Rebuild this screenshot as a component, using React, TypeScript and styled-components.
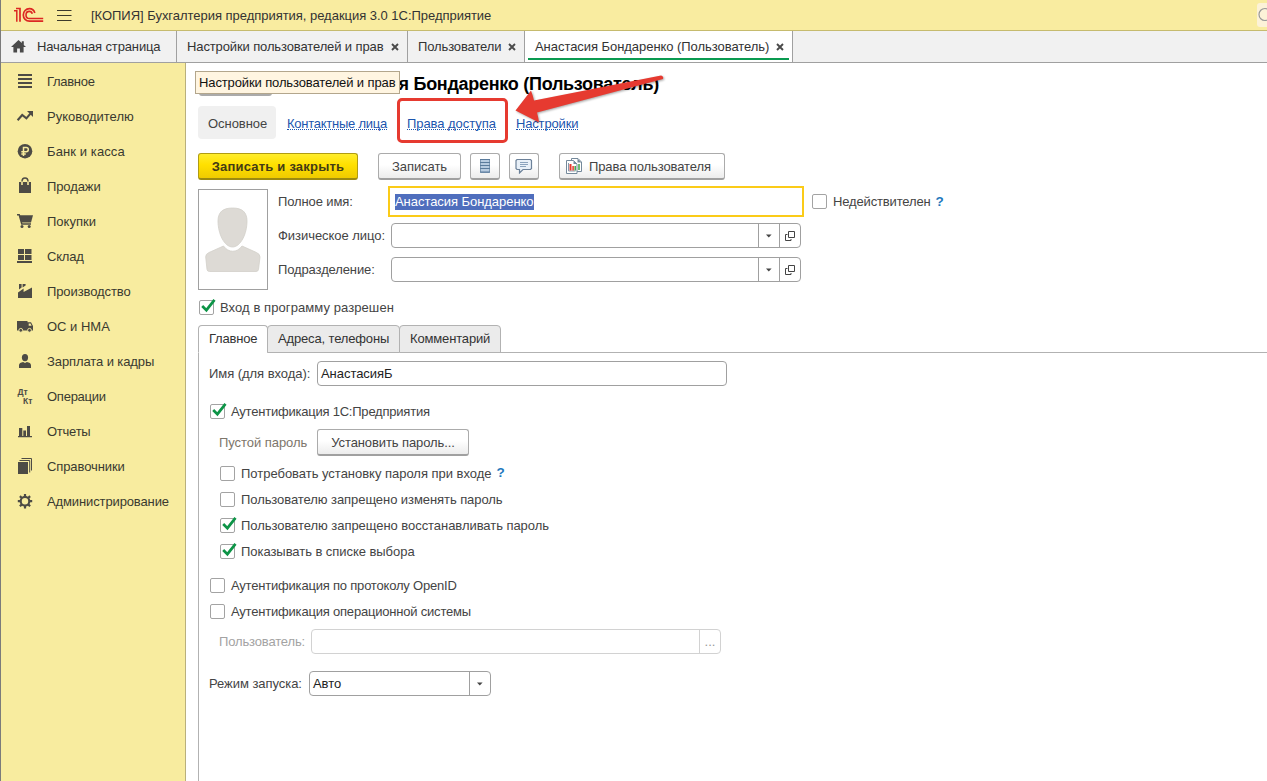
import React from "react";
import styled, { createGlobalStyle, css } from "styled-components";

const Global = createGlobalStyle`
  * { box-sizing: border-box; }
  html, body, #root { margin: 0; height: 100%; }
  body {
    overflow: hidden;
    background: #fff;
    color: #444;
    font-family: "Liberation Sans", Arial, sans-serif;
    font-size: 13px;
    line-height: 16px;
  }
`;

const Text = styled.span<{ $ls?: number }>`
  white-space: nowrap;
  letter-spacing: ${(p) => p.$ls ?? -0.05}px;
`;

const Window = styled.div`
  position: relative;
  display: flex;
  flex-direction: column;
  width: 1267px;
  height: 781px;
  border-left: 1px solid #7b7b7b;
  overflow: hidden;
`;

const TitleBar = styled.header`
  display: flex;
  align-items: center;
  height: 31px;
  flex: none;
  padding-left: 13px;
  background: #f9eca0;
  border-bottom: 1px solid #c6bb6e;
  color: #333;
`;
const TitleText = styled(Text)`
  margin-left: 19px;
  padding-top: 2px;
`;
const SearchStub = styled.div`
  width: 10px;
  height: 24px;
  margin-left: auto;
  border-radius: 3px 0 0 3px;
  background: #fcf2d8;
  overflow: hidden;
`;
const LogoSvg = styled.svg`
  display: block;
  flex: none;
`;
const MenuSvg = styled.svg`
  margin: 0 0 1px 13px;
  flex: none;
`;

const TabBar = styled.nav`
  display: flex;
  height: 32px;
  flex: none;
  background: #f1f1f1;
  border-bottom: 1px solid #a0a0a0;
  color: #333;
`;
const WindowTab = styled.div<{ $width: number; $active?: boolean }>`
  position: relative;
  display: flex;
  align-items: center;
  justify-content: space-between;
  width: ${(p) => p.$width}px;
  padding: 0 8px 0 10px;
  border-right: 1px solid #a0a0a0;
  background: ${(p) => (p.$active ? "#fff" : "transparent")};
  ${(p) =>
    p.$active &&
    css`
      &::after {
        content: "";
        position: absolute;
        left: 3px;
        right: 3px;
        bottom: 2px;
        height: 2px;
        background: #0a9a50;
      }
    `}
`;
const HomeTab = styled(WindowTab)`
  justify-content: flex-start;
  gap: 11px;
`;

const Body = styled.div`
  display: flex;
  flex: 1;
  min-height: 0;
`;
const Sidebar = styled.aside`
  width: 185px;
  flex: none;
  padding-top: 1px;
  background: #f8ec9f;
  border-right: 1px solid #b9b07c;
  color: #3a3a30;
`;
const SideItem = styled.div`
  display: flex;
  align-items: center;
  height: 35px;
  padding-left: 15px;
  gap: 13px;
  svg { flex: none; }
`;

const Form = styled.main`
  flex: 1;
  min-width: 0;
  display: flex;
  flex-direction: column;
  padding-left: 12px;
`;
const Heading = styled.h1`
  flex: none;
  width: 461px;
  height: 43px;
  margin: 0;
  line-height: 42px;
  font-size: 18px;
  font-weight: 700;
  color: #000;
  text-align: right;
  white-space: nowrap;
  letter-spacing: -0.28px;
`;
const Tooltip = styled.div`
  position: absolute;
  left: 194px;
  top: 71px;
  width: 205px;
  height: 23px;
  padding: 3px 0 0 3px;
  background: #fff5e1;
  border: 1px solid #b3a68c;
  color: #111;
`;
const NavShadow = styled.div`
  position: absolute;
  left: 198px;
  top: 86px;
  width: 73px;
  height: 10px;
  border-radius: 3px;
  background: #ababab;
`;
const Links = styled.div`
  display: flex;
  align-items: center;
  height: 33px;
  flex: none;
`;
const CurrentLink = styled.div`
  display: flex;
  align-items: center;
  width: 78px;
  height: 33px;
  padding: 2px 0 0 10px;
  border-radius: 4px;
  background: #f0f0f0;
`;
const Link = styled(Text)<{ $gap: number }>`
  height: 15px;
  line-height: 15px;
  margin: 0 0 0 ${(p) => p.$gap}px;
  padding-top: 1px;
  color: #1c55ae;
  border-bottom: 1px dotted #1c55ae;
`;
const Toolbar = styled.div`
  display: flex;
  flex: none;
  margin-top: 14px;
  height: 27px;
`;
const Button = styled.div<{ $width: number; $gap?: number; $primary?: boolean }>`
  display: flex;
  align-items: center;
  justify-content: center;
  gap: 6px;
  width: ${(p) => p.$width}px;
  height: 27px;
  margin-left: ${(p) => p.$gap ?? 0}px;
  border: 1px solid #ababab;
  border-bottom: 2px solid #a0a0a0;
  border-radius: 3px;
  background: linear-gradient(#fff 45%, #ececec);
  ${Text} { padding-top: 2px; }
  ${(p) =>
    p.$primary &&
    css`
      color: #433b15;
      font-weight: 700;
      border-color: #b09c12;
      border-bottom-color: #9c8a10;
      background: linear-gradient(#ffed2c, #ffe000 45%, #efcb00);
    `}
`;
const ReportButton = styled(Button)`
  justify-content: flex-start;
  padding-left: 5px;
`;

const Person = styled.section`
  display: flex;
  flex: none;
  margin-top: 6px;
  height: 104px;
`;
const Photo = styled.div`
  width: 70px;
  height: 101px;
  margin-top: 3px;
  padding: 16px 0 0 6px;
  border: 1px solid #a0a0a0;
`;
const Fields = styled.div`
  display: flex;
  flex-direction: column;
  margin-left: 10px;
`;
const Field = styled.div<{ $h: number }>`
  display: flex;
  align-items: center;
  height: ${(p) => p.$h}px;
`;
const FieldLabel = styled(Text)<{ $width: number }>`
  width: ${(p) => p.$width}px;
  flex: none;
`;
const Input = styled.div<{ $width: number; $disabled?: boolean }>`
  display: flex;
  width: ${(p) => p.$width}px;
  height: 25px;
  border: 1px solid ${(p) => (p.$disabled ? "#d2d2d2" : "#a0a0a0")};
  border-radius: 4px;
  background: #fff;
  color: #222;
`;
const Value = styled(Text)`
  flex: 1;
  padding: 4px 0 0 3px;
`;
const InputButton = styled.span<{ $disabled?: boolean }>`
  display: flex;
  align-items: center;
  justify-content: center;
  width: 21px;
  border-left: 1px solid ${(p) => (p.$disabled ? "#d2d2d2" : "#a0a0a0")};
  color: ${(p) => (p.$disabled ? "#999" : "#444")};
`;
const FocusedInput = styled.div`
  display: flex;
  align-items: center;
  width: 416px;
  height: 31px;
  padding-left: 5px;
  border: 2px solid #fbcb18;
  margin-right: 8px;
`;
const Selection = styled(Text)`
  height: 16px;
  background: #4f6ebd;
  color: #fff;
`;

const CheckRow = styled.div<{ $h?: number; $indent?: number }>`
  display: flex;
  align-items: center;
  height: ${(p) => p.$h ?? 26}px;
  padding-left: ${(p) => p.$indent ?? 0}px;
  ${Text} { padding-top: ${(p) => (p.$h ? 0 : 2)}px; }
`;
const Box = styled.span`
  width: 15px;
  height: 15px;
  flex: none;
  margin-right: 6px;
  border: 1px solid #a3a3a3;
  border-radius: 2px;
  background: #fff;
  svg { display: block; margin: -3px 0 0 0; overflow: visible; }
`;
const Help = styled.span`
  margin-left: 5px;
  color: #1f78bd;
  font-weight: 700;
  font-size: 13.5px;
`;

const PageTabs = styled.div`
  display: flex;
  flex: none;
  height: 28px;
`;
const PageTab = styled.div<{ $width: number; $active?: boolean }>`
  width: ${(p) => p.$width}px;
  margin-right: -1px;
  padding: 5px 0 0 10px;
  border: 1px solid #b2b2b2;
  border-radius: 4px 4px 0 0;
  background: ${(p) => (p.$active ? "#fff" : "#ebebeb")};
  border-bottom-color: ${(p) => (p.$active ? "#fff" : "#b2b2b2")};
  color: #333;
`;
const TabsRest = styled.div`
  flex: 1;
  border-bottom: 1px solid #b2b2b2;
`;
const PagePanel = styled.section`
  flex: 1;
  padding: 8px 0 0 10px;
  border-left: 1px solid #b2b2b2;
`;
const Row = styled.div<{ $top?: number; $indent?: number; $faded?: string }>`
  display: flex;
  align-items: center;
  margin-top: ${(p) => p.$top ?? 0}px;
  padding-left: ${(p) => p.$indent ?? 0}px;
  color: ${(p) => p.$faded ?? "inherit"};
`;
const Group = styled.div<{ $top: number }>`
  margin-top: ${(p) => p.$top}px;
`;

const Highlight = styled.div`
  position: absolute;
  left: 396px;
  top: 98px;
  width: 111px;
  height: 45px;
  border: 3px solid #e63a30;
  border-radius: 5px;
`;
const Arrow = styled.svg`
  position: absolute;
  left: 508px;
  top: 68px;
  path { filter: drop-shadow(1px 1px 1px rgba(0, 0, 0, 0.35)); }
`;

const Close = () => (
  <svg width="8" height="8" viewBox="0 0 8 8">
    <path d="M1 1l6 6M7 1l-6 6" stroke="#4a4a4a" strokeWidth="1.9" />
  </svg>
);

const Check = ({ on }: { on?: boolean }) => (
  <Box>
    {on && (
      <svg width="15" height="15" viewBox="0 0 15 15">
        <path d="M2.2 8l4.2 4.2L14.5 1.8" fill="none" stroke="#0d9447" strokeWidth="2.7" />
      </svg>
    )}
  </Box>
);

const Caret = () => (
  <svg width="6" height="4" viewBox="0 0 6 4">
    <path d="M0 .5h5.6L2.8 3.6z" fill="#444" />
  </svg>
);
const OpenIcon = () => (
  <svg width="10" height="10" viewBox="0 0 10 10" fill="none" stroke="#444">
    <path d="M3.5.5h6v6h-6zM2.5 3.5h-2v6h5.500v-1.500" />
  </svg>
);

const K = "#4d4b45";
const icons: Record<string, React.ReactNode> = {
  list: <path d="M2 2h14v2H2zM2 6h14v2H2zM2 10h14v2H2zM2 14h14v2H2z" fill={K} />,
  trend: (
    <>
      <path d="M1.6 13.2l4.6-5.2 4.2 3.4 4-4.8" fill="none" stroke={K} strokeWidth="2.1" />
      <path d="M11 4h6v6z" fill={K} />
    </>
  ),
  ruble: (
    <>
      <circle cx="9" cy="9.2" r="7.3" fill={K} />
      <path d="M7.5 14V5.5h2.700a2.100 2.100 0 010 4.200H5.300M5.300 12h4.500" fill="none" stroke="#f8ec9f" strokeWidth="1.5" />
    </>
  ),
  bag: (
    <>
      <path d="M3 5h12v11H3z" fill={K} />
      <path d="M6 8V4.500a3 3 0 016 0V8" fill="none" stroke="#f8ec9f" strokeWidth="1.6" />
      <path d="M6 4.500a3 3.500 0 016 0" fill="none" stroke={K} strokeWidth="1.5" />
    </>
  ),
  cart: (
    <>
      <path d="M1 2.700h2.200l2.600 9.300h9.200" fill="none" stroke={K} strokeWidth="1.5" />
      <path d="M3.400 3.200H17L15 10.500H5.200z" fill={K} />
      <circle cx="6" cy="14.500" r="1.5" fill={K} />
      <circle cx="13.200" cy="14.500" r="1.5" fill={K} />
    </>
  ),
  store: <path d="M2 2h6v5H2zM9 2h6.500v5H9zM2 8h6v5H2zM9 8h6.500v5H9zM1 14h15v2H1z" fill={K} />,
  factory: <path d="M2 16V10.500l5.600-4v3.400L16 5.500V16zM3 2h2.600v3.500L3 7.500zM6.600 2h3v1.400l-3 2z" fill={K} />,
  truck: (
    <>
      <path d="M1 4h10.500v9.500H1zM11.500 5.200h3.500l2 3.800v4.500h-5.500z" fill={K} />
      <path d="M12.700 6.500h1.800l1.100 2.300h-2.900z" fill="#f8ec9f" />
      <circle cx="4.800" cy="13.300" r="1.9" fill={K} stroke="#f8ec9f" strokeWidth=".9" />
      <circle cx="13.500" cy="13.300" r="1.9" fill={K} stroke="#f8ec9f" strokeWidth=".9" />
    </>
  ),
  person: (
    <>
      <ellipse cx="9" cy="5.600" rx="3.100" ry="3.600" fill={K} />
      <path d="M3 16v-2.700c0-2 1.800-2.900 4.100-3.300L9 11l1.900-1c2.300.4 4.100 1.300 4.100 3.300V16z" fill={K} />
    </>
  ),
  dtkt: (
    <g fill={K} fontFamily="Liberation Sans, Arial, sans-serif" fontSize="8.5" fontWeight="700">
      <text x="1.5" y="8.3">Дт</text>
      <text x="7" y="16.5">Кт</text>
    </g>
  ),
  chart: <path d="M2 14h14v1.300H2zM3 6h3.300v8H3zM7.300 8.500H10V14H7.300zM11 4h3v10h-3z" fill={K} />,
  books: (
    <>
      <path d="M2 5h10v12H2z" fill={K} />
      <path d="M3.500 3.500h10.200V15.500M5.500 1.500h10V13.500" fill="none" stroke={K} strokeWidth="1" />
    </>
  ),
  gear: (
    <>
      <circle cx="9" cy="9.2" r="4.3" fill="none" stroke={K} strokeWidth="2.2" />
      <path
        d="M9 2v2.600M9 13.800v2.600M1.800 9.200h2.600M13.600 9.200h2.600M3.900 4.100l1.900 1.900M12.200 12.400l1.900 1.900M14.100 4.100l-1.900 1.900M5.800 12.400l-1.900 1.900"
        stroke={K}
        strokeWidth="2.2"
      />
    </>
  ),
};

const menu: [string, string, number][] = [
  ["list", "Главное", -0.3],
  ["trend", "Руководителю", 0],
  ["ruble", "Банк и касса", 0.1],
  ["bag", "Продажи", -0.1],
  ["cart", "Покупки", 0],
  ["store", "Склад", -0.2],
  ["factory", "Производство", -0.1],
  ["truck", "ОС и НМА", 0],
  ["person", "Зарплата и кадры", -0.1],
  ["dtkt", "Операции", -0.25],
  ["chart", "Отчеты", -0.25],
  ["books", "Справочники", -0.1],
  ["gear", "Администрирование", -0.12],
];

const Logo = () => (
  <LogoSvg width="30" height="16" viewBox="0 0 30 16" fill="none" stroke="#dc2723">
    <path d="M0 3.700h2.800V14.800" strokeWidth="1.5" />
    <path d="M2 1.500h4V14.800" strokeWidth="1.7" />
    <path d="M20.800 6C20 3.200 17.900 1.700 15.400 1.700c-3.500 0-6.100 2.700-6.100 6.200 0 3.600 2.700 6.300 6.100 6.300H29.200" strokeWidth="1.7" />
    <path d="M18.300 6.800c-.4-1.500-1.500-2.400-2.900-2.400-2 0-3.400 1.600-3.400 3.500 0 2.100 1.500 3.600 3.500 3.600H29.200" strokeWidth="1.6" />
  </LogoSvg>
);

const PickerInput = () => (
  <Input $width={410}>
    <Value />
    <InputButton><Caret /></InputButton>
    <InputButton><OpenIcon /></InputButton>
  </Input>
);

export default function App() {
  return (
    <>
      <Global />
      <Window>
        <TitleBar>
          <Logo />
          <MenuSvg width="15" height="12" viewBox="0 0 15 12">
            <path d="M0 1.5h14.500M0 6.500h14.500M0 11.500h14.500" stroke="#3c3a2c" />
          </MenuSvg>
          <TitleText $ls={-0.03}>[КОПИЯ] Бухгалтерия предприятия, редакция 3.0 1С:Предприятие</TitleText>
          <SearchStub>
            <svg width="10" height="24" viewBox="0 0 10 24">
              <circle cx="8" cy="11.5" r="6" fill="none" stroke="#999" strokeWidth="1.2" />
            </svg>
          </SearchStub>
        </TitleBar>
        <TabBar>
          <HomeTab $width={176}>
            <svg width="15" height="13" viewBox="0 0 15 13">
              <path d="M7.5 0L0 7h2.4v5.5h3.7V8.6h2.8v3.9h3.7V7H15l-2.2-2.1V1.2h-2v1.9z" fill="#4a4a4a" />
            </svg>
            <Text $ls={-0.13}>Начальная страница</Text>
          </HomeTab>
          <WindowTab $width={231}>
            <Text $ls={-0.12}>Настройки пользователей и прав</Text>
            <Close />
          </WindowTab>
          <WindowTab $width={117}>
            <Text $ls={-0.12}>Пользователи</Text>
            <Close />
          </WindowTab>
          <WindowTab $width={268} $active>
            <Text>Анастасия Бондаренко (Пользователь)</Text>
            <Close />
          </WindowTab>
        </TabBar>
        <Body>
          <Sidebar>
            {menu.map(([icon, label, ls]) => (
              <SideItem key={icon}>
                <svg width="18" height="19" viewBox="0 0 18 19">{icons[icon]}</svg>
                <Text $ls={ls}>{label}</Text>
              </SideItem>
            ))}
          </Sidebar>
          <Form>
            <Heading>Анастасия Бондаренко (Пользователь)</Heading>
            <Links>
              <CurrentLink><Text>Основное</Text></CurrentLink>
              <Link $gap={11} $ls={-0.25}>Контактные лица</Link>
              <Link $gap={20}>Права доступа</Link>
              <Link $gap={20} $ls={-0.15}>Настройки</Link>
            </Links>
            <Toolbar>
              <Button $width={160} $primary><Text $ls={0.2}>Записать и закрыть</Text></Button>
              <Button $width={83} $gap={20}><Text>Записать</Text></Button>
              <Button $width={30} $gap={9}>
                <svg width="12" height="16" viewBox="0 0 12 16">
                  <path d="M1.500 1.500h9v13h-9z" fill="#b7cbe0" stroke="#7c98b4" />
                  <path d="M1 1.500h10M1 4.500h10M1 7.500h10M1 10.500h10M1 14h10" stroke="#5a7b9c" strokeWidth="1.2" />
                </svg>
              </Button>
              <Button $width={30} $gap={9}>
                <svg width="18" height="16" viewBox="0 0 18 16">
                  <path d="M2 1.500h13.500l1 1v8l-1 1H8l-3.500 3.500v-3.500H2l-1-1v-8z" fill="#e8f0f8" stroke="#6c8199" strokeWidth="1.2" />
                  <path d="M5 4.500h8M5 6.500h8M5 8.500h6" stroke="#8ba3bd" />
                </svg>
              </Button>
              <ReportButton $width={166} $gap={20}>
                <svg width="18" height="17" viewBox="0 0 18 17">
                  <path d="M6.500.500h6.500l3.500 3.500V13.500h-10z" fill="#fff" stroke="#74899b" />
                  <path d="M12.500.500v4h4z" fill="#74899b" />
                  <path d="M14 6v6" stroke="#3fa448" strokeWidth="1.5" />
                  <path d="M1.500 2.500h7l3.500 3.500v9.500H1.500z" fill="#fff" stroke="#74899b" />
                  <path d="M8.500 2.500v3.600h3.500z" fill="#74899b" />
                  <path d="M3.500 5v8h7" fill="none" stroke="#8899aa" />
                  <path d="M5.500 6v6.500" stroke="#e5392f" strokeWidth="2" />
                  <path d="M8.100 8v4.500" stroke="#e5392f" strokeWidth="1.5" />
                  <path d="M10.200 8v4.500" stroke="#3fa448" strokeWidth="1.5" />
                </svg>
                <Text $ls={-0.1}>Права пользователя</Text>
              </ReportButton>
            </Toolbar>
            <Person>
              <Photo>
                <svg width="56" height="68" viewBox="0 0 56 68">
                  <g fill="#dddad5" stroke="#d2cfc9" strokeWidth=".8">
                    <path d="M27.500 2C17.500 2 13 6.500 13 15c0 13 6.500 26 14.500 26S42 28 42 15C42 6.500 37.500 2 27.500 2z" />
                    <path d="M18.500 40L4 46.500Q.500 48 .700 51L2 63.500Q2.300 65.500 4.500 65.500h46.500q2.200 0 2.500-2L55 51Q55 48 51.500 46.500L37 40C32 47 23.500 47 18.500 40z" />
                  </g>
                </svg>
              </Photo>
              <Fields>
                <Field $h={31}>
                  <FieldLabel $width={110} $ls={-0.12}>Полное имя:</FieldLabel>
                  <FocusedInput><Selection>Анастасия Бондаренко</Selection></FocusedInput>
                  <Check />
                  <Text $ls={-0.15}>Недействителен</Text>
                  <Help>?</Help>
                </Field>
                <Field $h={37}>
                  <FieldLabel $width={113}>Физическое лицо:</FieldLabel>
                  <PickerInput />
                </Field>
                <Field $h={31}>
                  <FieldLabel $width={113} $ls={-0.12}>Подразделение:</FieldLabel>
                  <PickerInput />
                </Field>
              </Fields>
            </Person>
            <CheckRow $h={35} $indent={1}>
              <Check on />
              <Text $ls={0.08}>Вход в программу разрешен</Text>
            </CheckRow>
            <PageTabs>
              <PageTab $width={70} $active><Text $ls={-0.2}>Главное</Text></PageTab>
              <PageTab $width={133}><Text $ls={-0.15}>Адреса, телефоны</Text></PageTab>
              <PageTab $width={102}><Text $ls={-0.15}>Комментарий</Text></PageTab>
              <TabsRest />
            </PageTabs>
            <PagePanel>
              <Row>
                <FieldLabel $width={108}>Имя (для входа):</FieldLabel>
                <Input $width={410}><Value>АнастасияБ</Value></Input>
              </Row>
              <Group $top={12}>
                <CheckRow $indent={1}>
                  <Check on />
                  <Text $ls={-0.22}>Аутентификация 1С:Предприятия</Text>
                </CheckRow>
              </Group>
              <Row $top={5} $indent={10} $faded="#7d766b">
                <FieldLabel $width={98}>Пустой пароль</FieldLabel>
                <Row $faded="#444"><Button $width={152}><Text $ls={-0.1}>Установить пароль...</Text></Button></Row>
              </Row>
              <Group $top={4}>
                <CheckRow $indent={11}>
                  <Check />
                  <Text $ls={-0.02}>Потребовать установку пароля при входе</Text>
                  <Help>?</Help>
                </CheckRow>
                <CheckRow $indent={11}><Check /><Text $ls={-0.07}>Пользователю запрещено изменять пароль</Text></CheckRow>
                <CheckRow $indent={11}><Check on /><Text>Пользователю запрещено восстанавливать пароль</Text></CheckRow>
                <CheckRow $indent={11}><Check on /><Text>Показывать в списке выбора</Text></CheckRow>
              </Group>
              <Group $top={8}>
                <CheckRow $indent={1}><Check /><Text $ls={-0.2}>Аутентификация по протоколу OpenID</Text></CheckRow>
                <CheckRow $indent={1}><Check /><Text $ls={-0.2}>Аутентификация операционной системы</Text></CheckRow>
              </Group>
              <Row $top={5} $indent={10} $faded="#a3a3a3">
                <FieldLabel $width={92} $ls={-0.15}>Пользователь:</FieldLabel>
                <Input $width={410} $disabled>
                  <Value />
                  <InputButton $disabled>...</InputButton>
                </Input>
              </Row>
              <Row $top={17}>
                <FieldLabel $width={100}>Режим запуска:</FieldLabel>
                <Input $width={182}>
                  <Value>Авто</Value>
                  <InputButton><Caret /></InputButton>
                </Input>
              </Row>
            </PagePanel>
          </Form>
        </Body>
        <NavShadow />
        <Tooltip><Text $ls={-0.12}>Настройки пользователей и прав</Text></Tooltip>
        <Highlight />
        <Arrow width="160" height="64" viewBox="0 0 160 64">
          <path
            d="M6.500 42.500L22 22.500Q24 28 25 32.500L152 7.500Q155 8.500 154 11L28 44.500Q29.500 50 30 54.500z"
            fill="#e63a30"
          />
        </Arrow>
      </Window>
    </>
  );
}
